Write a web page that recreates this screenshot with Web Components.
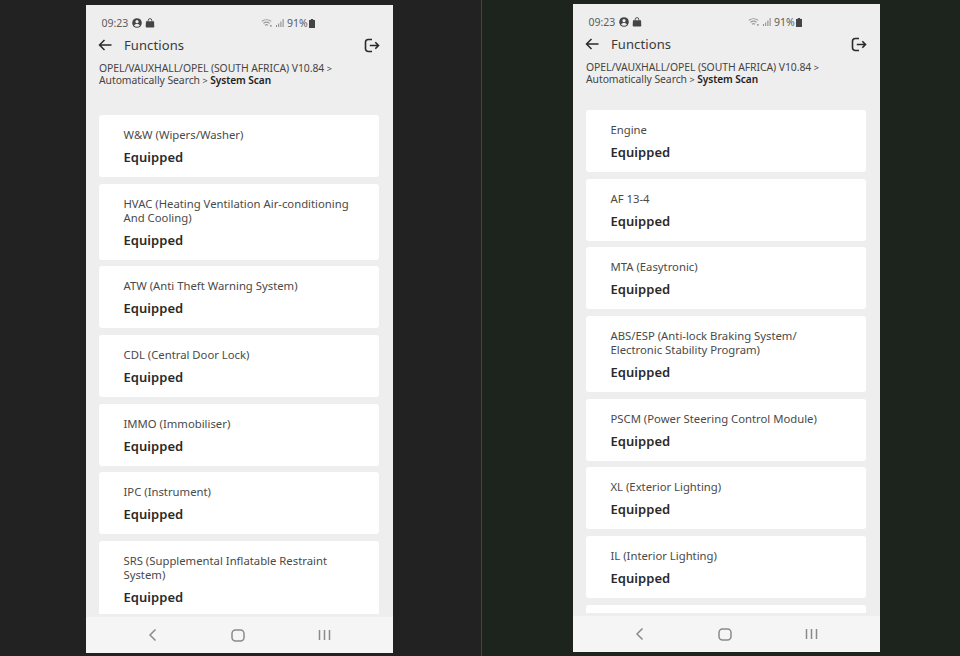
<!DOCTYPE html>
<html><head><meta charset="utf-8"><style>
html,body{margin:0;padding:0;background:#222}
body{display:flex;width:960px;height:656px;overflow:hidden;font-family:"Noto Sans","Open Sans",sans-serif}
</style></head><body>
<scan-pane side="left">
  <scan-item title-text="W&amp;W (Wipers/Washer)"></scan-item>
  <scan-item title-text="HVAC (Heating Ventilation Air-conditioning And Cooling)"></scan-item>
  <scan-item title-text="ATW (Anti Theft Warning System)"></scan-item>
  <scan-item title-text="CDL (Central Door Lock)"></scan-item>
  <scan-item title-text="IMMO (Immobiliser)"></scan-item>
  <scan-item title-text="IPC (Instrument)"></scan-item>
  <scan-item title-text="SRS (Supplemental Inflatable Restraint System)"></scan-item>
</scan-pane>
<scan-pane side="right">
  <scan-item title-text="Engine"></scan-item>
  <scan-item title-text="AF 13-4"></scan-item>
  <scan-item title-text="MTA (Easytronic)"></scan-item>
  <scan-item title-text="ABS/ESP (Anti-lock Braking System/ Electronic Stability Program)"></scan-item>
  <scan-item title-text="PSCM (Power Steering Control Module)"></scan-item>
  <scan-item title-text="XL (Exterior Lighting)"></scan-item>
  <scan-item title-text="IL (Interior Lighting)"></scan-item>
  <scan-item blank></scan-item>
</scan-pane>
<script>
class ScanItem extends HTMLElement{
  constructor(){super();this.attachShadow({mode:'open'});}
  connectedCallback(){
    const blank=this.hasAttribute('blank');
    this.shadowRoot.innerHTML=`<style>
      :host{display:block;flex:none;background:#fff;border-radius:3px;box-sizing:border-box;padding:13px 24px 10px 24.500px;min-height:62px}
      .t{font-size:11.300px;line-height:14px;color:#4a4a4a}
      .v{margin-top:5px;font-size:13px;line-height:20px;font-weight:600;color:#2a2a2a;letter-spacing:.05px}
    </style>${blank?'':`<div class="t"></div><div class="v">Equipped</div>`}`;
    if(!blank)this.shadowRoot.querySelector('.t').textContent=this.getAttribute('title-text');
  }
}
class StatusBar extends HTMLElement{
  constructor(){super();this.attachShadow({mode:'open'}).innerHTML=`<style>
    :host{display:flex;align-items:center;height:14px;margin-top:11px;padding:0 0 0 15.500px;color:#5c5c5c;font-size:10.500px;line-height:14px}
    svg{display:block;flex:none}
    .l{display:flex;align-items:center;gap:3.500px;width:159.500px}
    .r{display:flex;align-items:center;gap:2px}
  </style>
  <div class="l"><span>09:23</span>
    <svg width="10" height="10" viewBox="0 0 10 10"><circle cx="5" cy="5" r="4.800" fill="#444"/><circle cx="5" cy="3.700" r="1.600" fill="#eee"/><path d="M2 7.600c.7-1.300 1.800-1.700 3-1.700s2.300.4 3 1.700c-.8.8-1.800 1.200-3 1.200s-2.200-.4-3-1.200z" fill="#eee"/></svg>
    <svg width="10" height="10" viewBox="0 0 10 10"><path d="M1 3.300h8l.3 5.200a1 1 0 0 1-1 1H1.700a1 1 0 0 1-1-1z" fill="#444"/><path d="M3.200 3.500V2.400a1.800 1.800 0 0 1 3.600 0v1.100" fill="none" stroke="#444" stroke-width=".9"/></svg>
  </div>
  <div class="r">
    <svg width="12" height="10" viewBox="0 0 12 10"><path d="M.8 3.400a7.500 7.500 0 0 1 9.400 0M2.400 5.400a5 5 0 0 1 6.200 0M4 7.200a2.500 2.500 0 0 1 3 0" fill="none" stroke="#999" stroke-width="1.100"/><circle cx="9.900" cy="7.800" r=".9" fill="#888"/></svg>
    <svg width="10" height="10" viewBox="0 0 10 10"><path d="M1 7h1v2H1zM3.200 5.500h1V9h-1zM5.400 3.500h1V9h-1zM7.600 1h1v8h-1z" fill="#888"/></svg>
    <span>91%</span>
    <svg width="6" height="9" viewBox="0 0 6 9" style="margin-left:-1px"><path d="M1.800 0h2.400v1H6v8H0V1h1.800z" fill="#444"/></svg>
  </div>`;}
}
class AppBar extends HTMLElement{
  constructor(){super();this.attachShadow({mode:'open'}).innerHTML=`<style>
    :host{display:flex;align-items:center;height:20px;margin-top:5px;padding:0 13px 0 12px;color:#333}
    .title{font-size:13px;line-height:19px;margin-left:12px;flex:1;letter-spacing:.1px;color:#3a3a3a}
    svg{display:block;flex:none}
  </style>
  <svg width="14" height="14" viewBox="0 0 14 14"><path d="M13.500 7H1.500M6.500 2 1.500 7l5 5" fill="none" stroke="#2a2a2a" stroke-width="1.500"/></svg>
  <div class="title">Functions</div>
  <svg width="16" height="15" viewBox="0 0 16 15"><path d="M8 1.500H4.300A2.800 2.800 0 0 0 1.500 4.300v6.400a2.800 2.800 0 0 0 2.800 2.800H8M5.800 7.500h8.700M11.300 4.300l3.200 3.200-3.200 3.200" fill="none" stroke="#2a2a2a" stroke-width="1.600"/></svg>`;}
}
class CrumbTrail extends HTMLElement{
  constructor(){super();this.attachShadow({mode:'open'}).innerHTML=`<style>
    :host{display:block;margin-top:8px;padding:0 14px 0 13px;font-size:10.400px;line-height:11.700px;color:#444;letter-spacing:-.06px}
    b{font-weight:600;font-size:10.100px;color:#222}
    .s{font-size:9px}
  </style>OPEL/VAUXHALL/OPEL (SOUTH AFRICA) V10.84 <span class="s">&gt;</span><br>Automatically Search <span class="s">&gt;</span> <b>System Scan</b>`;}
}
class NavBar extends HTMLElement{
  constructor(){super();this.attachShadow({mode:'open'}).innerHTML=`<style>
    :host{display:flex;flex:none;height:36px;background:#f5f5f5;align-items:center;justify-content:space-between;box-sizing:border-box;padding:0 62px 0 62px}
    svg{display:block}
  </style>
  <svg width="9" height="14" viewBox="0 0 9 14"><path d="M7.500 1.500 2 7l5.500 5.500" fill="none" stroke="#8a8a8a" stroke-width="1.500"/></svg>
  <svg width="14" height="13" viewBox="0 0 14 13"><rect x="1" y="1" width="12" height="11" rx="3.500" fill="none" stroke="#8a8a8a" stroke-width="1.500"/></svg>
  <svg width="13" height="12" viewBox="0 0 13 12"><path d="M1.500 1v10M6.500 1v10M11.500 1v10" stroke="#8a8a8a" stroke-width="1.500"/></svg>`;}
}
class ScanPane extends HTMLElement{
  constructor(){super();this.attachShadow({mode:'open'}).innerHTML=`<style>
    :host{display:block;flex:none;box-sizing:border-box;height:656px}
    :host([side=left]){width:482px;background:#222;border-right:1px solid #444;padding:5px 0 0 86px}
    :host([side=right]){width:478px;background:#1c241d;padding:4px 0 0 91px}
    .phone{width:307px;height:648px;background:#eee;display:flex;flex-direction:column}
    .list{flex:none;height:0;flex-grow:1;overflow:hidden;margin-bottom:3.500px;padding:0 14px 0 13px;display:flex;flex-direction:column;gap:6.700px}
    :host([side=left]) .list{padding-top:28.500px}
    :host([side=right]) .list{padding-top:24.500px}
  </style>
  <div class="phone"><status-bar></status-bar><app-bar></app-bar><crumb-trail></crumb-trail>
  <div class="list"><slot></slot></div><nav-bar></nav-bar></div>`;}
}
customElements.define('scan-item',ScanItem);
customElements.define('status-bar',StatusBar);
customElements.define('app-bar',AppBar);
customElements.define('crumb-trail',CrumbTrail);
customElements.define('nav-bar',NavBar);
customElements.define('scan-pane',ScanPane);
</script>
</body></html>
